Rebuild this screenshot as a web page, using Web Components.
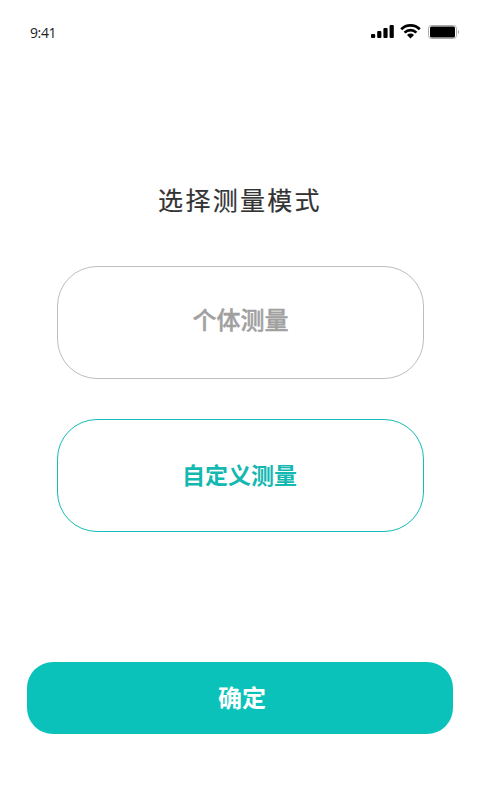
<!DOCTYPE html>
<html lang="zh">
<head>
<meta charset="utf-8">
<title>选择测量模式</title>
<style>
    html, body {
        margin: 0;
        padding: 0;
        background: #fff;
    }
    body {
        font-family: "Noto Sans CJK SC", "Noto Sans", sans-serif;
    }
</style>
</head>
<body>
<mode-page>
    <status-bar slot="status" time="9:41"></status-bar>
    <span slot="title">选择测量模式</span>
    <mode-option>个体测量</mode-option>
    <mode-option selected>自定义测量</mode-option>
    <confirm-button slot="action">确定</confirm-button>
</mode-page>

<script>
class StatusBar extends HTMLElement {
    constructor() {
        super();
        this.attachShadow({ mode: 'open' });
    }

    connectedCallback() {
        this.shadowRoot.innerHTML = `
            <style>
                :host {
                    display: flex;
                    justify-content: space-between;
                    align-items: center;
                    height: 24px;
                    padding: 20px 21px 0 30px;
                }
                .time {
                    font-family: "Open Sans", sans-serif;
                    font-size: 14px;
                    color: #222;
                    letter-spacing: -0.4px;
                }
                .icons {
                    display: flex;
                    align-items: center;
                    gap: 6px;
                }
                .battery { margin-left: 1px; }
                svg { display: block; }
            </style>
            <span class="time">${this.getAttribute('time')}</span>
            <div class="icons">
                <svg width="23" height="18" viewBox="0 0 23 18">
                    <rect x="0" y="11" width="4.2" height="4" rx="1"/>
                    <rect x="6.2" y="8" width="4.2" height="7" rx="1"/>
                    <rect x="12.4" y="5" width="4.2" height="10" rx="1"/>
                    <rect x="18.6" y="2" width="4.2" height="13" rx="1"/>
                </svg>
                <svg width="21" height="18" viewBox="0 0 21 18">
                    <path d="M1.2 6.2a13.2 13.2 0 0 1 18.6 0M4.6 9.6a8.4 8.4 0 0 1 11.8 0" fill="none" stroke="#000" stroke-width="2.7"/>
                    <path d="M7 11.9a5 5 0 0 1 7 0L10.5 15.4z"/>
                </svg>
                <svg class="battery" width="31" height="18" viewBox="0 0 31 18">
                    <rect x="0.5" y="2.5" width="28" height="13" rx="3" fill="none" stroke="#aaa"/>
                    <rect x="2" y="3.6" width="25" height="10.8" rx="1.5"/>
                    <path d="M30 7v4a2 2 0 0 0 1-2 2 2 0 0 0-1-2z" fill="#aaa"/>
                </svg>
            </div>
        `;
    }
}

class ModeOption extends HTMLElement {
    constructor() {
        super();
        this.attachShadow({ mode: 'open' });
    }

    connectedCallback() {
        this.shadowRoot.innerHTML = `
            <style>
                :host {
                    display: flex;
                    justify-content: center;
                    align-items: center;
                    box-sizing: border-box;
                    width: 367px;
                    height: 113px;
                    border: 1px solid #bdbdbd;
                    border-radius: 40px;
                    font-size: 24px;
                    font-weight: 500;
                    -webkit-text-stroke: 0.4px currentColor;
                    color: #a0a0a0;
                }
                :host([selected]) {
                    border-color: #14bdb6;
                    color: #14b8b2;
                    font-size: 23px;
                    font-weight: 700;
                    -webkit-text-stroke: 0;
                    padding-right: 2px;
                }
                span { position: relative; top: -4px; }
                :host([selected]) span { top: -2px; }
            </style>
            <span><slot></slot></span>
        `;
    }
}

class ConfirmButton extends HTMLElement {
    constructor() {
        super();
        this.attachShadow({ mode: 'open' });
    }

    connectedCallback() {
        this.shadowRoot.innerHTML = `
            <style>
                :host {
                    display: flex;
                    justify-content: center;
                    align-items: center;
                    height: 72px;
                    padding-left: 4px;
                    border-radius: 26px;
                    background: #0bc2bb;
                    color: #fff;
                    font-size: 24px;
                    font-weight: 700;
                    cursor: pointer;
                }
                span { position: relative; top: -2px; }
            </style>
            <span><slot></slot></span>
        `;
    }
}

class ModePage extends HTMLElement {
    constructor() {
        super();
        this.attachShadow({ mode: 'open' });
    }

    connectedCallback() {
        this.shadowRoot.innerHTML = `
            <style>
                :host {
                    display: flex;
                    flex-direction: column;
                    box-sizing: border-box;
                    height: 800px;
                    overflow: hidden;
                }
                .title {
                    margin-top: 136px;
                    height: 40px;
                    line-height: 38px;
                    text-align: center;
                    font-size: 25px;
                    letter-spacing: 2.3px;
                    -webkit-text-stroke: 0.2px currentColor;
                    color: #333;
                }
                .options {
                    display: flex;
                    flex-direction: column;
                    gap: 40px;
                    margin: 46px 56px 0 57px;
                }
                .action {
                    margin: 130px 27px 0;
                }
            </style>
            <slot name="status"></slot>
            <div class="title"><slot name="title"></slot></div>
            <div class="options"><slot></slot></div>
            <div class="action"><slot name="action"></slot></div>
        `;
    }
}

customElements.define('status-bar', StatusBar);
customElements.define('mode-option', ModeOption);
customElements.define('confirm-button', ConfirmButton);
customElements.define('mode-page', ModePage);
</script>
</body>
</html>
